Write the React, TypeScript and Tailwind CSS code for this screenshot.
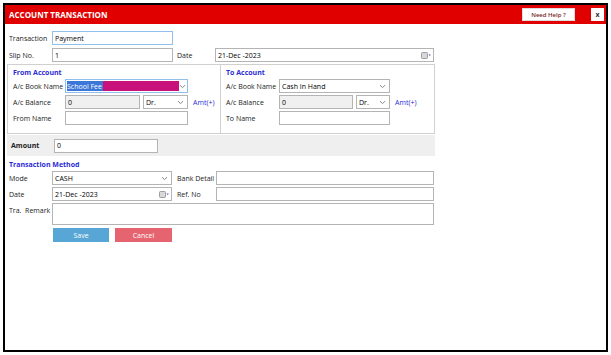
import React from "react";

const Chevron = () => (
  <svg width="7" height="5" viewBox="0 0 7 5" className="shrink-0">
    <path d="M1 1.2 L3.5 3.6 L6 1.2" fill="none" stroke="#7a7a7a" strokeWidth="0.9" />
  </svg>
);

const Cal = () => (
  <svg width="10" height="7" viewBox="0 0 10 7" className="shrink-0">
    <rect x="0.5" y="0.5" width="6" height="6" rx="1" fill="#d8d8d8" stroke="#8a8a8a" strokeWidth="0.8" />
    <path d="M7.6 2.6 L9.8 2.6 L8.7 3.9 Z" fill="#3b5b9a" />
  </svg>
);

const Input = ({ w, value = "", bg = "bg-white", border = "border-[#b4b4b4]", h = "h-[14px]" }: { w: string; value?: string; bg?: string; border?: string; h?: string }) => (
  <div className={`${w} ${h} ${bg} border ${border} flex items-center pl-[2px] text-[7px] text-black leading-none`}>{value}</div>
);

const Select = ({ w, value, children }: { w: string; value?: string; children?: React.ReactNode }) => (
  <div className={`${w} h-[14px] bg-white border border-[#b4b4b4] flex items-center pl-[1px] pr-[3px] text-[7px] text-black leading-none`}>
    <div className="flex-1 flex items-center">{children ?? <span className="pl-[1px]">{value}</span>}</div>
    <Chevron />
  </div>
);

const DateBox = ({ w, value }: { w: string; value: string }) => (
  <div className={`${w} h-[14px] bg-white border border-[#b4b4b4] flex items-center pl-[2px] pr-[2px] text-[7px] text-black leading-none`}>
    <div className="flex-1">{value}</div>
    <Cal />
  </div>
);

const Label = ({ w, children, className = "" }: { w: string; children: React.ReactNode; className?: string }) => (
  <div className={`${w} text-[7px] text-[#222] leading-none shrink-0 ${className}`}>{children}</div>
);

export default function App() {
  return (
    <div className="w-[611px] h-[355px] bg-white pt-[3px] pl-[3px]" style={{ fontFamily: '"Open Sans", "Noto Sans", sans-serif' }}>
      <div className="w-[605px] h-[349px] border-2 border-black flex flex-col">
        <div className="h-[19px] bg-[#e10000] flex items-center justify-between pl-[4px] pr-[2px] shrink-0">
          <div className="text-white font-bold text-[8px] leading-none">ACCOUNT TRANSACTION</div>
          <div className="flex items-center gap-[16px]">
            <div className="w-[53px] h-[13px] bg-white border border-[#ddd] flex items-center justify-center text-[6px] font-semibold text-[#7a1e1e] leading-none">Need Help ?</div>
            <div className="w-[13px] h-[13px] bg-white flex items-center justify-center text-[7px] font-bold text-[#333] leading-none">x</div>
          </div>
        </div>

        <div className="pl-[2px] pt-[7px] flex flex-col">
          <div className="flex items-center pl-[2px]">
            <Label w="w-[43px]">Transaction</Label>
            <Input w="w-[121px]" value="Payment" border="border-[#8fbfea]" />
          </div>
          <div className="flex items-center pl-[2px] mt-[3px]">
            <Label w="w-[43px]">Slip No.</Label>
            <Input w="w-[121px]" value="1" />
            <Label w="w-[42px]" className="pl-[4px]">Date</Label>
            <DateBox w="w-[219px]" value="21-Dec -2023" />
          </div>

          <div className="flex mt-[2px] h-[70px]">
            <div className="w-[214px] border border-[#d0d0d0] pl-[5px] pt-[4px]">
              <div className="text-[7px] font-bold text-[#2b2bd6] leading-none">From Account</div>
              <div className="flex items-center mt-[3px]">
                <Label w="w-[52px]">A/c Book Name</Label>
                <div className="w-[123px] h-[14px] bg-white border border-[#8fbfea] flex items-center pl-[1px] pr-[3px] text-[7px] leading-none">
                  <div className="flex-1 flex items-center h-full py-[1px]">
                    <div className="w-[112px] h-full bg-[#c8117a] flex items-center">
                      <span className="bg-[#3b77d8] text-white h-full flex items-center pr-[1px]">School Fee</span>
                    </div>
                  </div>
                  <Chevron />
                </div>
              </div>
              <div className="flex items-center mt-[2px]">
                <Label w="w-[52px]">A/c Balance</Label>
                <Input w="w-[75px]" value="0" bg="bg-[#f0f0f0]" />
                <div className="ml-[3px]"><Select w="w-[45px]" value="Dr." /></div>
                <div className="ml-[5px] text-[7px] text-[#2b2bd6] leading-none">Amt(+)</div>
              </div>
              <div className="flex items-center mt-[2px]">
                <Label w="w-[52px]">From Name</Label>
                <Input w="w-[123px]" />
              </div>
            </div>
            <div className="w-[214px] border border-[#d0d0d0] border-l-0 pl-[5px] pt-[4px]">
              <div className="text-[7px] font-bold text-[#2b2bd6] leading-none">To Account</div>
              <div className="flex items-center mt-[3px]">
                <Label w="w-[53px]">A/c Book Name</Label>
                <Select w="w-[111px]" value="Cash In Hand" />
              </div>
              <div className="flex items-center mt-[2px]">
                <Label w="w-[53px]">A/c Balance</Label>
                <Input w="w-[74px]" value="0" bg="bg-[#f0f0f0]" />
                <div className="ml-[3px]"><Select w="w-[34px]" value="Dr." /></div>
                <div className="ml-[5px] text-[7px] text-[#2b2bd6] leading-none">Amt(+)</div>
              </div>
              <div className="flex items-center mt-[2px]">
                <Label w="w-[53px]">To Name</Label>
                <Input w="w-[111px]" />
              </div>
            </div>
          </div>

          <div className="w-[428px] h-[21px] bg-[#efefef] mt-[1px] flex items-center pl-[4px]">
            <Label w="w-[43px]" className="font-bold">Amount</Label>
            <Input w="w-[104px]" value="0" />
          </div>

          <div className="pl-[2px] mt-[5px] text-[7px] font-bold text-[#2b2bd6] leading-none">Transaction Method</div>

          <div className="flex items-center pl-[2px] mt-[3px]">
            <Label w="w-[43px]">Mode</Label>
            <Select w="w-[120px]" value="CASH" />
            <Label w="w-[44px]" className="pl-[5px]">Bank Detail</Label>
            <Input w="w-[218px]" />
          </div>
          <div className="flex items-center pl-[2px] mt-[2px]">
            <Label w="w-[43px]">Date</Label>
            <DateBox w="w-[120px]" value="21-Dec -2023" />
            <Label w="w-[44px]" className="pl-[5px]">Ref. No</Label>
            <Input w="w-[218px]" />
          </div>
          <div className="flex items-start pl-[2px] mt-[2px]">
            <Label w="w-[43px]" className="pt-[4px]">Tra.&nbsp; Remark</Label>
            <Input w="w-[382px]" h="h-[22px]" />
          </div>
          <div className="flex items-center pl-[46px] mt-[3px] gap-[6px]">
            <div className="w-[56px] h-[14px] bg-[#58a6d6] flex items-center justify-center text-[7px] text-white leading-none">Save</div>
            <div className="w-[57px] h-[14px] bg-[#e5646f] flex items-center justify-center text-[7px] text-white leading-none">Cancel</div>
          </div>
        </div>
      </div>
    </div>
  );
}
